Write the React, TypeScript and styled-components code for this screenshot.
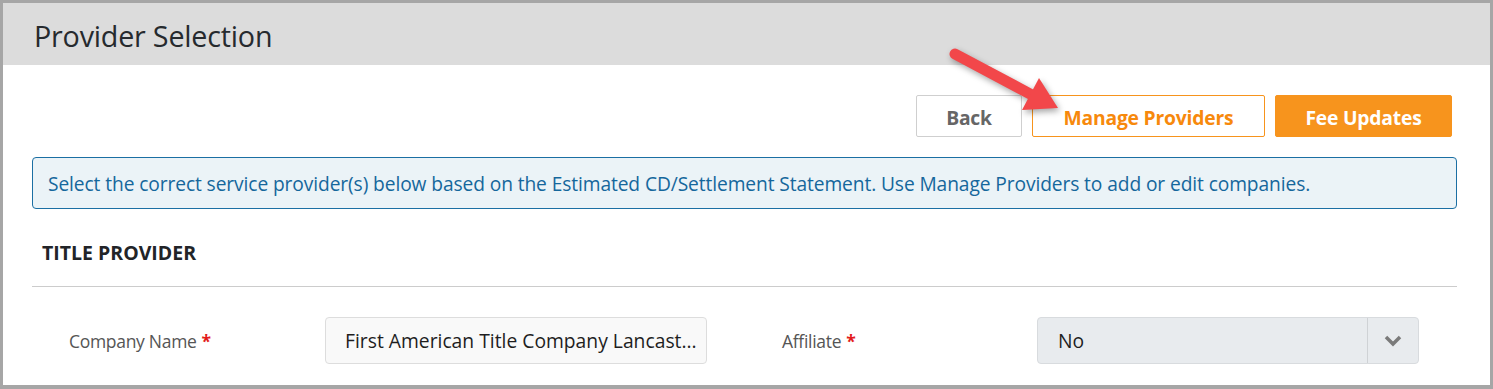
import styled, { createGlobalStyle } from "styled-components";

const GlobalStyle = createGlobalStyle`
  html, body {
    margin: 0;
    padding: 0;
    background: #ffffff;
  }
  body {
    font-family: "Open Sans", "Noto Sans", sans-serif;
  }
`;

const Frame = styled.div`
  position: relative;
  box-sizing: border-box;
  width: 1493px;
  height: 389px;
  border: 3px solid #a6a6a6;
  border-bottom-width: 4px;
  background: #ffffff;
  overflow: hidden;
`;

const Header = styled.div`
  height: 62px;
  background: #dcdcdc;
  display: flex;
  align-items: center;
  padding-left: 31px;
`;

const Title = styled.h1`
  margin: 0;
  font-size: 28.7px;
  font-weight: 400;
  color: #262a2e;
  letter-spacing: -0.2px;
  padding-top: 2px;
`;

const Body = styled.div`
  padding: 30px 33px 0 29px;
`;

const Toolbar = styled.div`
  display: flex;
  justify-content: flex-end;
  gap: 10px;
  padding-right: 5px;
`;

const Button = styled.button<{ $variant: "plain" | "outline" | "solid"; $width: number }>`
  box-sizing: border-box;
  height: 42px;
  width: ${({ $width }) => $width}px;
  padding: 3px 0 0;
  border-radius: 2px;
  font-family: "Open Sans", sans-serif;
  font-size: 19.3px;
  font-weight: 700;
  letter-spacing: -0.2px;
  cursor: pointer;
  border: 1px solid
    ${({ $variant }) => ($variant === "plain" ? "#cfcfcf" : "#f7941d")};
  background: ${({ $variant }) => ($variant === "solid" ? "#f7941d" : "#ffffff")};
  color: ${({ $variant }) =>
    $variant === "plain" ? "#666666" : $variant === "outline" ? "#f7890c" : "#ffffff"};
`;

const Notice = styled.div`
  margin-top: 20px;
  box-sizing: border-box;
  height: 52px;
  display: flex;
  align-items: center;
  padding-left: 15px;
  background: #ebf3f7;
  border: 1px solid #1b6fa3;
  border-radius: 4px;
  color: #15679c;
  font-size: 19.2px;
  letter-spacing: -0.1px;
`;

const SectionTitle = styled.div`
  padding: 30px 0 19px 10px;
  line-height: 28px;
  font-size: 19.5px;
  font-weight: 700;
  color: #222428;
  border-bottom: 1px solid #cccccc;
`;

const Row = styled.div`
  display: flex;
  align-items: center;
  margin-top: 30px;
  padding-left: 37px;
`;

const Label = styled.div<{ $width: number }>`
  width: ${({ $width }) => $width}px;
  font-size: 17.5px;
  color: #555555;
  letter-spacing: -0.3px;
`;

const Required = styled.span`
  color: #e31b1b;
  font-weight: 700;
  margin-left: 5px;
`;

const TextInput = styled.div`
  box-sizing: border-box;
  width: 382px;
  height: 47px;
  display: flex;
  align-items: center;
  padding-left: 19px;
  background: #f9f9f9;
  border: 1px solid #dddddd;
  border-radius: 4px;
  font-size: 19.3px;
  color: #1e1e1e;
  white-space: nowrap;
  overflow: hidden;
`;

const Spacer = styled.div`
  width: 75px;
`;

const Select = styled.div`
  box-sizing: border-box;
  width: 382px;
  height: 47px;
  display: flex;
  align-items: stretch;
  background: #e8ebee;
  border: 1px solid #d8dbde;
  border-radius: 4px;
  font-size: 19.3px;
  color: #1e1e1e;
`;

const SelectValue = styled.div`
  flex: 1;
  display: flex;
  align-items: center;
  padding-left: 20px;
`;

const SelectToggle = styled.div`
  width: 50px;
  display: flex;
  align-items: center;
  justify-content: center;
  border-left: 1px solid #cfd2d5;
`;

const Arrow = styled.svg`
  position: absolute;
  left: 937px;
  top: 37px;
  width: 130px;
  height: 80px;
  overflow: visible;
  filter: drop-shadow(2px 3px 3px rgba(0, 0, 0, 0.35));
`;

export default function App() {
  return (
    <>
      <GlobalStyle />
      <Frame>
        <Header>
          <Title>Provider Selection</Title>
        </Header>
        <Body>
          <Toolbar>
            <Button $variant="plain" $width={106}>Back</Button>
            <Button $variant="outline" $width={233}>Manage Providers</Button>
            <Button $variant="solid" $width={177}>Fee Updates</Button>
          </Toolbar>
          <Notice>
            Select the correct service provider(s) below based on the Estimated CD/Settlement
            Statement. Use Manage Providers to add or edit companies.
          </Notice>
          <SectionTitle>TITLE PROVIDER</SectionTitle>
          <Row>
            <Label $width={256}>
              Company Name<Required>*</Required>
            </Label>
            <TextInput>First American Title Company Lancast...</TextInput>
            <Spacer />
            <Label $width={255}>
              Affiliate<Required>*</Required>
            </Label>
            <Select>
              <SelectValue>No</SelectValue>
              <SelectToggle>
                <svg width="18" height="12" viewBox="0 0 18 12">
                  <polyline
                    points="2,2 9,9 16,2"
                    fill="none"
                    stroke="#7a7a7a"
                    strokeWidth="3.5"
                  />
                </svg>
              </SelectToggle>
            </Select>
          </Row>
        </Body>
        <Arrow viewBox="0 0 130 80">
          <line
            x1="15"
            y1="14"
            x2="92"
            y2="55"
            stroke="#f2474a"
            strokeWidth="11"
            strokeLinecap="round"
          />
          <polygon points="118,68 99,38 82,70" fill="#f2474a" />
        </Arrow>
      </Frame>
    </>
  );
}
